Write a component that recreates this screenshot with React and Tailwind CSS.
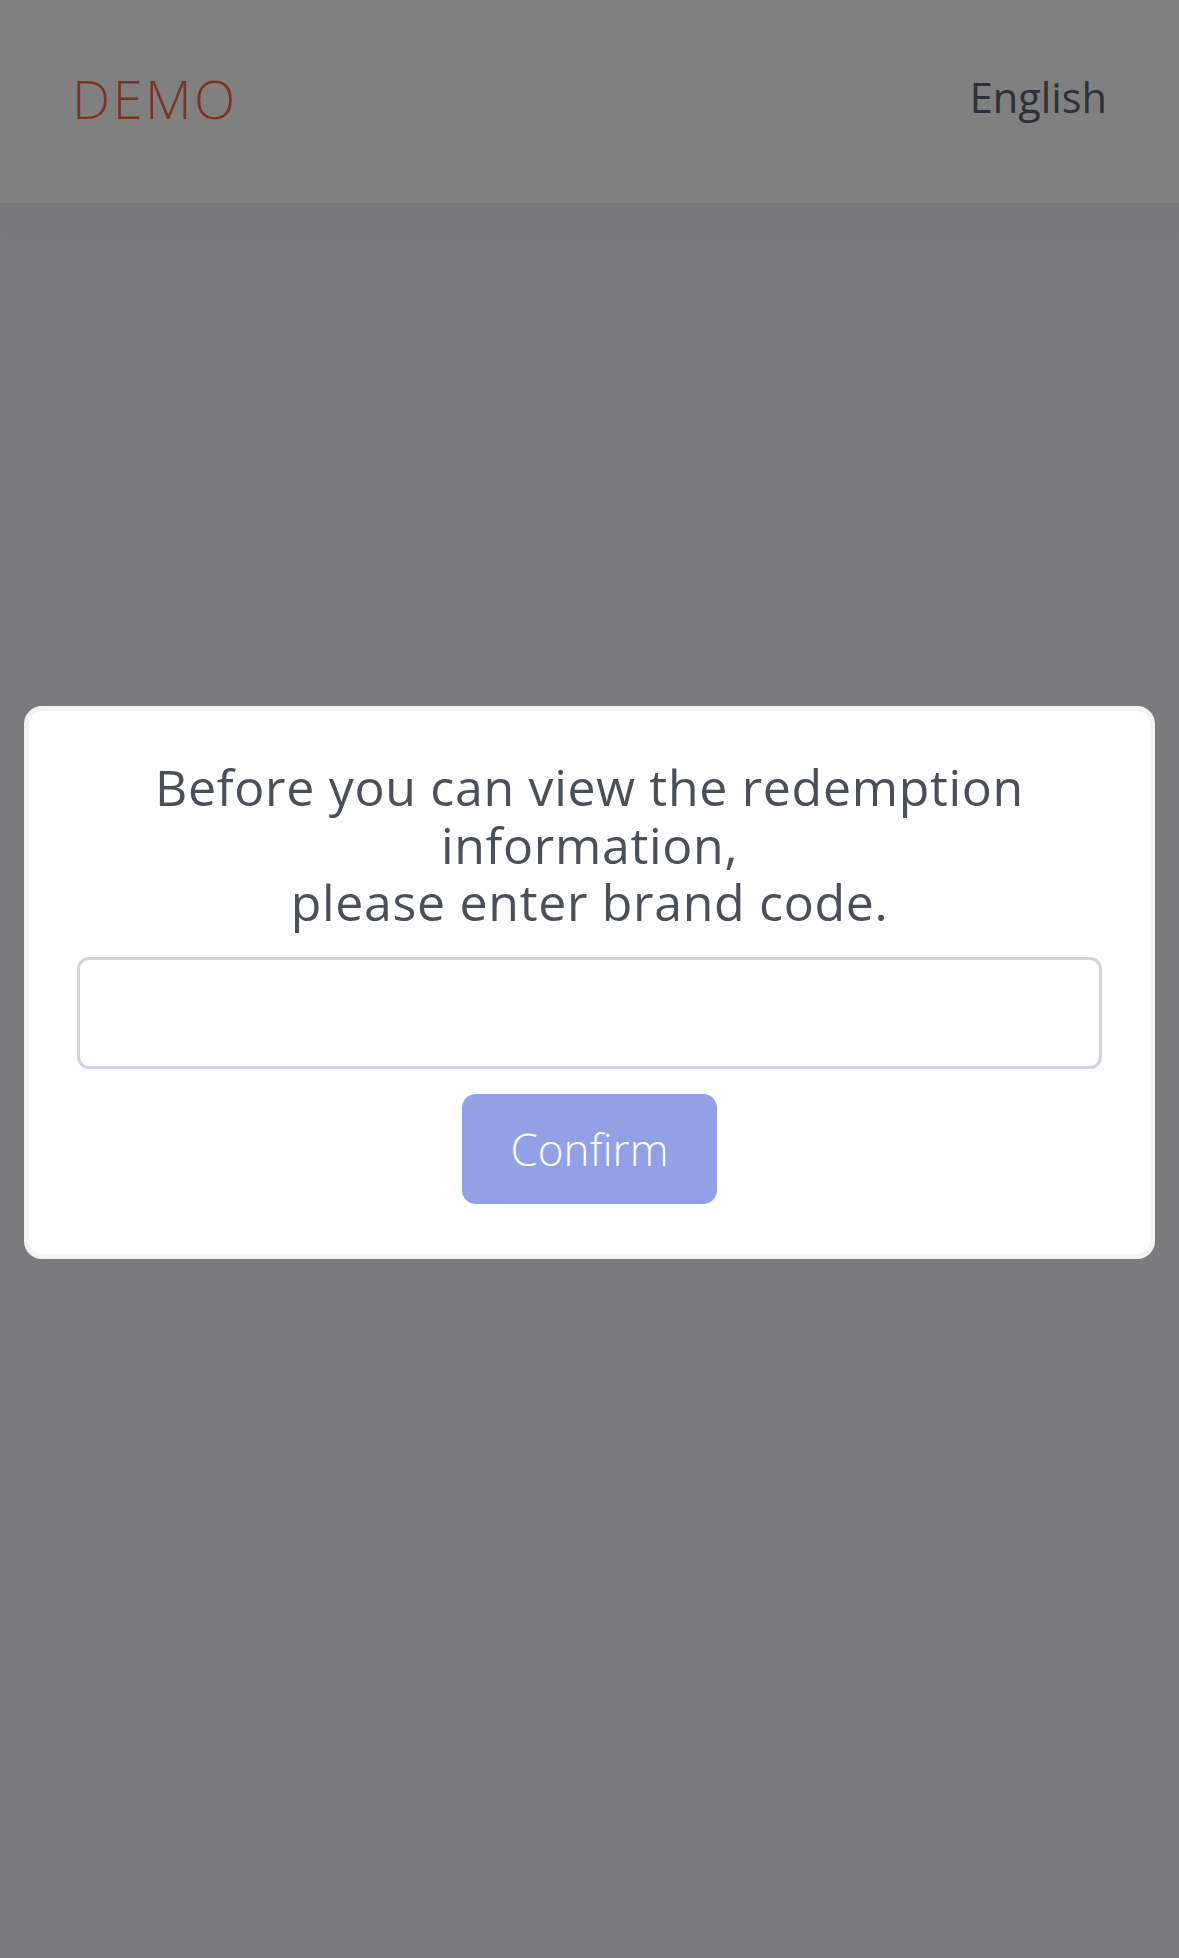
import React, { useState } from "react";

const font = { fontFamily: '"Open Sans", "Noto Sans", sans-serif' };

const BrandCodeModal = ({ onConfirm }) => {
    const [code, setCode] = useState("");

    return (
        <div className="fixed inset-0 flex items-center justify-center px-6 pt-[7px]">
            <div className="w-full bg-white border-[5px] border-[#f3f3f3] rounded-[18px] px-[48px] pt-[48px] pb-[50px] flex flex-col items-center gap-[25px]">
                <h2 className="text-center text-[50px] leading-[57.6px] tracking-[0.7px] font-normal text-[#4b4f56]">
                    Before you can view the redemption
                    <br />
                    information,
                    <br />
                    please enter brand code.
                </h2>
                <input
                    type="text"
                    value={code}
                    onChange={(e) => setCode(e.target.value)}
                    className="w-full h-[112px] border-[3px] border-[#d1d4da] rounded-[12px] px-6 text-[42px] text-[#4b4f56] outline-none"
                />
                <button
                    type="button"
                    onClick={() => onConfirm?.(code)}
                    className="w-[255px] h-[110px] bg-[#93a0e6] rounded-[14px] text-white text-[44px] font-light"
                >
                    Confirm
                </button>
            </div>
        </div>
    );
};

export default function App() {
    return (
        <div className="min-h-screen bg-[#7b7b7d]" style={font}>
            {/* Header */}
            <header className="h-[203px] bg-[#808080] flex items-center justify-between pl-[72px] pr-[72px] shadow-[0_10px_40px_rgba(0,0,0,0.04)]">
                <span className="text-[#7c3326] text-[54px] font-light tracking-[2.5px] -mt-[6px]">DEMO</span>
                <span className="text-[#2e3038] text-[41.5px] -mt-[8px]">English</span>
            </header>

            <BrandCodeModal />
        </div>
    );
}
